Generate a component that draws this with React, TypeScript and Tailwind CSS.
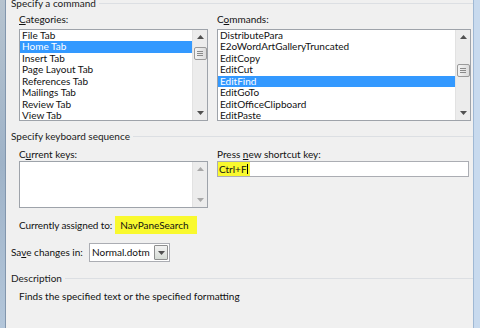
const categories = [
  "File Tab",
  "Home Tab",
  "Insert Tab",
  "Page Layout Tab",
  "References Tab",
  "Mailings Tab",
  "Review Tab",
  "View Tab",
]

const commands = [
  "DistributePara",
  "E2oWordArtGalleryTruncated",
  "EditCopy",
  "EditCut",
  "EditFind",
  "EditGoTo",
  "EditOfficeClipboard",
  "EditPaste",
]

function Arrow({ up, disabled }: { up?: boolean; disabled?: boolean }) {
  return (
    <svg width="7" height="4" viewBox="0 0 7 4" className="block">
      <path d={up ? "M0 4 L3.5 0 L7 4 Z" : "M0 0 L7 0 L3.5 4 Z"} fill={disabled ? "#a8a8a8" : "#505050"} />
    </svg>
  )
}

function Thumb() {
  return (
    <div className="w-[13px] h-[13px] rounded-[2px] border border-[#9a9a9a] bg-gradient-to-r from-[#f4f4f4] to-[#dcdcdc] flex flex-col items-center justify-center gap-[1px]">
      <div className="w-[6px] h-px bg-[#8a8a8a]" />
      <div className="w-[6px] h-px bg-[#8a8a8a]" />
      <div className="w-[6px] h-px bg-[#8a8a8a]" />
    </div>
  )
}

function Scrollbar({ thumbTop, disabled }: { thumbTop?: number; disabled?: boolean }) {
  return (
    <div className="w-[15px] h-full bg-[#ececec] border-l border-[#e2e2e2] flex flex-col items-center">
      <div className="h-[14px] flex items-center justify-center">
        <Arrow up disabled={disabled} />
      </div>
      <div className="flex-1 relative w-full flex justify-center">
        {thumbTop !== undefined && (
          <div className="absolute" style={{ top: thumbTop }}>
            <Thumb />
          </div>
        )}
      </div>
      <div className="h-[14px] flex items-center justify-center">
        <Arrow disabled={disabled} />
      </div>
    </div>
  )
}

function ListBox({ items, selected, thumbTop, width }: { items: string[]; selected: number; thumbTop: number; width: string }) {
  return (
    <div className={`${width} h-[92px] border border-[#9ea3aa] bg-white flex`}>
      <div className="flex-1 overflow-hidden">
        {items.map((item, i) => (
          <div
            key={item}
            className={`h-[11.43px] leading-[11.43px] pl-[2px] whitespace-nowrap ${i === selected ? "bg-[#3399ff] text-white" : "text-[#111]"}`}
          >
            {item}
          </div>
        ))}
      </div>
      <Scrollbar thumbTop={thumbTop} />
    </div>
  )
}

function Section({ title }: { title: string }) {
  return (
    <div className="flex items-center h-[12px] pl-[5px]">
      <span className="whitespace-nowrap text-[#1a1a1a] pr-[3px]">{title}</span>
      <div className="flex-1 h-px bg-[#dcdfe3]" />
    </div>
  )
}

export default function App() {
  return (
    <div
      className="w-[480px] h-[328px] overflow-hidden flex bg-[#f0f0f0] text-[10px] text-[#111]"
      style={{ fontFamily: "Lato, 'Noto Sans', sans-serif" }}
    >
      <div className="w-[5px] h-full bg-gradient-to-b from-[#b6c3cf] via-[#9fb3c8] to-[#b3c6da]" />
      <div className="w-px h-full bg-[#8296ad]" />

      <div className="flex-1 flex flex-col">
        <div className="mt-[-3px]">
          <Section title="Specify a command" />
        </div>

        <div className="flex pl-[13px] gap-[9px] mt-[4px]">
          <div className="flex flex-col">
            <div className="h-[12px] leading-[12px]">
              <span className="underline">C</span>ategories:
            </div>
            <div className="mt-[4px]">
              <ListBox items={categories} selected={1} thumbTop={3} width="w-[189px]" />
            </div>
          </div>
          <div className="flex flex-col">
            <div className="h-[12px] leading-[12px]">
              C<span className="underline">o</span>mmands:
            </div>
            <div className="mt-[4px]">
              <ListBox items={commands} selected={4} thumbTop={20} width="w-[254px]" />
            </div>
          </div>
        </div>

        <div className="mt-[9px]">
          <Section title="Specify keyboard sequence" />
        </div>

        <div className="flex pl-[13px] gap-[9px] mt-[6px]">
          <div className="flex flex-col">
            <div className="h-[12px] leading-[12px]">
              C<span className="underline">u</span>rrent keys:
            </div>
            <div className="mt-[1px] w-[189px] h-[47px] border border-[#9ea3aa] bg-white flex">
              <div className="flex-1" />
              <Scrollbar disabled />
            </div>
          </div>
          <div className="flex flex-col">
            <div className="h-[12px] leading-[12px]">
              Press <span className="underline">n</span>ew shortcut key:
            </div>
            <div className="mt-[1px] w-[252px] h-[16px] border border-[#abadb3] bg-white flex items-center">
              <span className="h-full flex items-center bg-[#f9f92e] px-[1px] pr-[2px]">
                Ctrl+F<span className="inline-block w-px h-[10px] bg-black" />
              </span>
            </div>
          </div>
        </div>

        <div className="flex items-center pl-[13px] mt-[8px] h-[18px]">
          <span className="shrink-0 whitespace-nowrap tracking-[-0.1px]">Currently assigned to:</span>
          <span className="ml-[3px] h-full w-[82px] bg-[#f9f92e] flex items-center pl-[5px]">NavPaneSearch</span>
        </div>

        <div className="flex items-center pl-[5px] mt-[9px] h-[19px]">
          <span className="w-[78px] whitespace-nowrap">
            Sa<span className="underline">v</span>e changes in:
          </span>
          <div className="w-[81px] h-full border border-[#abadb3] bg-white flex items-center">
            <span className="flex-1 pl-[2px]">Normal.dotm</span>
            <div className="w-[14px] h-[15px] mr-[1px] border border-[#8e8f8f] rounded-[1px] bg-gradient-to-b from-[#f2f2f2] to-[#d6dcd6] flex items-center justify-center">
              <Arrow />
            </div>
          </div>
        </div>

        <div className="mt-[10px]">
          <Section title="Description" />
        </div>

        <div className="pl-[13px] mt-[6px] h-[12px] leading-[12px]">
          Finds the specified text or the specified formatting
        </div>
      </div>

      <div className="w-px h-full bg-[#9fb8d4]" />
      <div className="w-[6px] h-full bg-[#c8daee]" />
    </div>
  )
}
